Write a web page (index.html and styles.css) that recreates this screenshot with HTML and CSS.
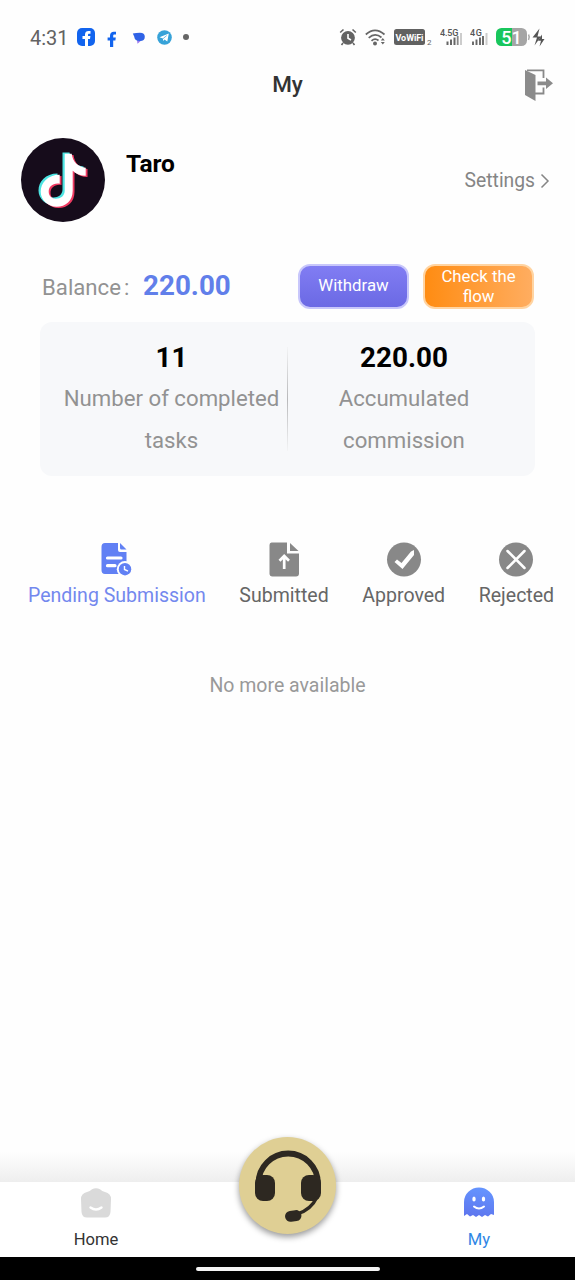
FILE: index.html
```html
<!DOCTYPE html>
<html lang="en">
<head>
<meta charset="utf-8">
<title>My</title>
<link rel="stylesheet" href="styles.css">
</head>
<body>
<div class="screen">
  <div class="status">
    <span class="clock">4:31</span>
    <svg class="st-fb" width="18" height="18" viewBox="0 0 18 18"><rect width="18" height="18" rx="5" fill="#1264ee"/><path d="M8 18V11H5.500V8H8V6.500C8 4 9.500 3 11.500 3H13.500V5.800H12.200C11.300 5.800 11 6.200 11 7V8H13.400L13 11H11V18Z" fill="#fff"/></svg>
    <svg class="st-f" width="10" height="16" viewBox="0 0 10 16"><path d="M3 16V9.500H.6V6.400H3V4.800C3 2 4.600.8 6.800.8H9V3.600H7.700C6.600 3.600 6.200 4 6.200 5V6.400H8.800L8.400 9.500H6.200V16Z" fill="#1264ee"/></svg>
    <svg class="st-chat" width="14" height="12" viewBox="0 0 14 12"><path d="M5 8 5.500 11.800 9.500 8.300Z" fill="#9b79ee"/><path d="M.8 1.500Q4 1 8 .8Q12.800 1 12.800 4.700Q12.800 9 8 9Q2.500 9 2.200 4.500Z" fill="#2f62e6"/></svg>
    <svg class="st-tg" width="15" height="15" viewBox="0 0 15 15"><circle cx="7.500" cy="7.500" r="7.300" fill="#36a2d8"/><path d="M2.500 7.300 11.800 3.500 10.300 11.500 7.500 9.500 6 11V8.500Z" fill="#fff"/><path d="M6 8.700 9.700 5.600" stroke="#36a2d8" stroke-width=".7"/></svg>
    <span class="st-dot"></span>
    <svg class="st-alarm" width="18" height="18" viewBox="0 0 18 18"><circle cx="9" cy="9.800" r="6.900" fill="#636363"/><path d="M1.200 4.500 4.500 1.500M16.800 4.500 13.500 1.500M4 15 2.500 17M14 15 15.500 17" stroke="#636363" stroke-width="1.600"/><path d="M9 6V10.300L12 12" fill="none" stroke="#fff" stroke-width="1.600"/></svg>
    <svg class="st-wifi" width="22" height="17" viewBox="0 0 22 17"><g fill="none" stroke="#666" stroke-width="1.700"><path d="M.8 5.500Q10 -2.700 19.500 5.500"/><path d="M3.700 8.800Q10 3 16.500 8.500"/><path d="M6.500 11.800Q10 8.500 13.500 11.500"/></g><circle cx="10" cy="14.500" r="2" fill="#666"/><path d="M15.800 11.500 17.800 9 19.800 11.500ZM15.800 13 17.800 15.500 19.800 13Z" fill="#666"/></svg>
    <svg class="st-vowifi" width="38" height="18" viewBox="0 0 38 18"><rect width="31" height="16" rx="2.500" fill="#616161"/><text x="15.500" y="11.700" text-anchor="middle" class="vw" textLength="28">VoWiFi</text><text x="33" y="16" class="sub">2</text></svg>
    <svg class="st-sig1" width="23" height="18" viewBox="0 0 23 18"><text x="0" y="7.500" class="net" textLength="18.500">4.5G</text><path d="M7.500 13.500V17M11 11.500V17M14.500 9.500V17" stroke="#666" stroke-width="2"/><path d="M21 5V17" stroke="#ccc" stroke-width="2"/><path d="M17.700 8V17" stroke="#888" stroke-width="1.800"/></svg>
    <svg class="st-sig2" width="18" height="18" viewBox="0 0 18 18"><text x="0" y="7.500" class="net" textLength="12">4G</text><path d="M3 13.500V17M6.500 11.500V17M10 9.500V17M13 8V17" stroke="#666" stroke-width="1.900"/><path d="M16.500 5V17" stroke="#ccc" stroke-width="2"/></svg>
    <span class="battery">51</span>
    <svg class="st-bolt" width="19" height="19" viewBox="31 0 19 19"><path d="M32.500 6.500Q34 9 32.500 12" stroke="#aaa" stroke-width="1.500" fill="none"/><path d="M43.500.5 36.500 9.500H41L38.500 17.500 45 8.500H41.500Z" fill="#555"/><path d="M46 6.500 42 12.800H45L43.500 18.500 48.500 11H46Z" fill="#555"/></svg>
  </div>
  <header class="top">
    <span></span><h1>My</h1>
    <svg width="30" height="32" viewBox="0 0 30 32"><path d="M3 1.300H19.500V9M19.500 18.500V24.500H11" fill="none" stroke="#898989" stroke-width="1.800"/><path d="M1 1 11.500 6V32L1 26Z" fill="#8b8b8b"/><path d="M13.500 12.500H22V8.500L29 14.300 22 20V16.300H13.500Z" fill="#8b8b8b"/></svg>
  </header>
  <section class="profile">
    <svg class="avatar" width="84" height="84" viewBox="0 0 84 84"><circle cx="42" cy="42" r="42" fill="#160c1b"/><defs><path id="note" d="M43 15H50C51 23 56 28 64 29V37C59 37 54 35 51 32V52C51 62 44 68 35 68C26 68 19 61 19 53C19 44 26 36 38 36V45C31 44 27 48 27 53C27 57 30 60 34 60C39 60 43 57 43 52Z"/></defs><use href="#note" x="-1.500" y="-.5" fill="#4de4e2"/><use href="#note" x="2.500" y="2" fill="#ef3b62"/><use href="#note" x=".7" y=".7" fill="#fff"/></svg>
    <div class="name">Taro</div>
    <div class="settings">Settings<svg width="10" height="16" viewBox="0 0 10 16"><path d="M1.500 1.500 8 8 1.500 14.500" fill="none" stroke="#858585" stroke-width="1.500"/></svg></div>
  </section>
  <section class="balance">
    <span class="label">Balance</span><span class="colon">:</span><span class="amount">220.00</span>
    <button class="btn withdraw">Withdraw</button>
    <button class="btn flow">Check the flow</button>
  </section>
  <section class="stats">
    <div class="stat"><b>11</b><span>Number of completed tasks</span></div>
    <div class="rule"></div>
    <div class="stat right"><b>220.00</b><span>Accumulated commission</span></div>
  </section>
  <nav class="tabs">
    <div class="tab active"><svg width="36" height="36" viewBox="0 0 36 36"><path d="M6 2H19V9Q19 11 21 11H27.500V33H6Q2.500 33 2.500 29V6Q2.500 2 6 2Z" fill="#6180f4"/><path d="M21 2 27.500 8.500H22.500Q21 8.500 21 7Z" fill="#6180f4"/><path d="M8.500 17H22M8.500 24.700H16" stroke="#fff" stroke-width="3.200" stroke-linecap="round"/><circle cx="26" cy="28.200" r="8.200" fill="#fefefe"/><circle cx="26" cy="28.200" r="6.200" fill="#6180f4"/><path d="M25.500 25V28.500L29 30.200" fill="none" stroke="#fff" stroke-width="1.400"/></svg><span>Pending Submission</span></div>
    <div class="tab"><svg width="36" height="36" viewBox="0 0 36 36"><path d="M5.500 1.500H21V12.500H33V32.500Q33 35.500 30 35.500H6.500Q3.500 35.500 3.500 32.500V4Q3.500 1.500 5.500 1.500Z" fill="#888"/><path d="M24 2 32.500 10H24Z" fill="#888"/><path d="M18.200 28V15.500M13.500 19.800 18.200 15 23 19.800" fill="none" stroke="#fff" stroke-width="2.700"/></svg><span>Submitted</span></div>
    <div class="tab"><svg width="36" height="36" viewBox="0 0 36 36"><circle cx="18" cy="18.500" r="17" fill="#888"/><path d="M8.500 21 11 18.500 15.500 22 25 10.500 28 9V14L16.500 28Z" fill="#fff"/></svg><span>Approved</span></div>
    <div class="tab"><svg width="36" height="36" viewBox="0 0 36 36"><circle cx="18" cy="18.500" r="17" fill="#888"/><path d="M9.500 10 26.500 27M26.500 10 9.500 27" stroke="#fff" stroke-width="2.500" stroke-linecap="round"/></svg><span>Rejected</span></div>
  </nav>
  <p class="empty">No more available</p>
  <div class="spacer"></div>
  <div class="fade"></div>
  <footer class="bar">
    <div class="item"><svg width="32" height="32" viewBox="0 0 32 32"><path d="M12 2.200Q16 .3 20 2.200Q22 4.500 25 5Q31 6.500 31 12L30.500 25Q30 30.500 25 30.500H7Q2 30.500 1.500 25L1 12Q1 6.500 7 5Q10 4.500 12 2.200Z" fill="#dadada"/><path d="M10.500 20.500Q16 24.500 21.500 20.500" fill="none" stroke="#fff" stroke-width="2.400" stroke-linecap="round"/></svg><span>Home</span></div>
    <div class="item blue"><svg width="32" height="32" viewBox="0 0 32 32"><defs><linearGradient id="g" x1=".6" y1="0" x2=".4" y2="1"><stop stop-color="#6595ff"/><stop offset="1" stop-color="#5e76ee"/></linearGradient></defs><path d="M1 15A15 14.500 0 0 1 31 15V28L28 27 25 29.500 22 28 19 30 16 28 13 30 10 28 7 29.500 4 27 1 29Z" fill="url(#g)"/><ellipse cx="11" cy="12" rx="1.700" ry="2.500" fill="#fff"/><ellipse cx="20.500" cy="12" rx="1.700" ry="2.500" fill="#fff"/><path d="M11 19.500Q16 23.500 21 19.500" fill="none" stroke="#fff" stroke-width="2" stroke-linecap="round"/></svg><span>My</span></div>
    <div class="support"><svg width="97" height="97" viewBox="0 1 97 97"><path d="M19.500 49V47.200A29.700 29.700 0 0 1 78.900 47.200V49" fill="none" stroke="#2d2821" stroke-width="5.800"/><rect x="16" y="39" width="20" height="26" rx="8" fill="#2d2821"/><rect x="62" y="39" width="20" height="26" rx="8" fill="#2d2821"/><path d="M78 61Q72 74 58 78" fill="none" stroke="#2d2821" stroke-width="3.300"/><rect x="46" y="74.500" width="16.500" height="11" rx="5.500" transform="rotate(-8 54 80)" fill="#2d2821"/></svg></div>
  </footer>
  <div class="home"><span></span></div>
</div>
</body>
</html>
```
FILE: styles.css
```css
* { box-sizing: border-box; }
body { margin: 0; background: #fff; font-family: Roboto, "Liberation Sans", sans-serif; }
svg { display: block; flex: none; }
.screen { width: 575px; height: 1280px; display: flex; flex-direction: column; overflow: hidden; background: #fefefe; }
.status { height: 60px; display: flex; align-items: flex-start; padding: 28px 0 0 30px; flex: none; }
.clock { width: 47px; font-size: 20px; line-height: 20px; color: #626262; white-space: nowrap; }
.st-f { margin: 3px 0 0 12px; }
.st-chat { margin: 4px 0 0 15px; }
.st-tg { margin: 2px 0 0 11px; }
.st-dot { width: 6px; height: 6px; margin: 6px 0 0 11px; border-radius: 50%; background: #666; }
.st-alarm { margin-left: 150px; }
.st-wifi { margin: 1px 0 0 8px; }
.st-vowifi { margin: 1px 0 0 7px; }
.st-sig1 { margin-left: 8px; }
.st-sig2 { margin-left: 7px; }
.battery { width: 31px; height: 18px; margin-left: 8px; flex: none; border-radius: 5.5px; background: linear-gradient(90deg, #18c65c 16px, #a5a5a5 16px); color: #fff; font-size: 18px; line-height: 19px; font-weight: 500; text-align: center; }
.vw { font-size: 9px; font-weight: 700; fill: #fff; }
.sub { font-size: 8px; fill: #666; }
.net { font-size: 9px; font-weight: 500; fill: #555; }
.top { height: 50px; flex: none; display: grid; grid-template-columns: 1fr auto 1fr; align-items: center; padding: 0 21px; }
.top h1 { margin: 0 0 2px; font-size: 22.5px; font-weight: 500; color: #333; }
.top svg { justify-self: end; }
.profile { height: 112px; margin-top: 28px; flex: none; display: flex; padding: 0 25px 0 21px; }
.name { margin: 10px 0 0 21px; font-size: 24.5px; line-height: 31px; font-weight: 700; color: #000; }
.settings { display: flex; align-items: center; gap: 5px; height: 85px; margin-left: auto; font-size: 19.3px; color: #858585; }
.balance { height: 72px; flex: none; display: flex; align-items: flex-start; padding: 14px 41px 0 42px; white-space: nowrap; }
.label, .colon { font-size: 22.2px; line-height: 47px; color: #929292; }
.label { width: 79px; }
.colon { width: 22px; padding-left: 3px; }
.amount { font-size: 27.8px; line-height: 43px; font-weight: 700; color: #617fea; }
.btn { width: 111px; height: 45px; padding: 0; border: 2px solid #c8c7fb; border-radius: 12px; color: #fff; font: 16.8px/20px Roboto, sans-serif; }
.withdraw { margin-left: auto; padding-bottom: 4px; background: linear-gradient(#817df3, #6b69e4); }
.flow { margin-left: 14px; border-color: #ffd4a2; background: linear-gradient(90deg, #ff8c12, #ffad60); white-space: normal; padding: 0 14px 4px; }
.stats { height: 154px; margin: 0 40px; flex: none; display: flex; border-radius: 12px; background: #f7f8fa; }
.stat { width: 247px; flex: none; display: flex; flex-direction: column; align-items: center; padding: 15px 7px 0 23px; text-align: center; }
.stat b { font-size: 27.8px; line-height: 41px; color: #000; }
.stat span { width: 217px; font-size: 22.2px; line-height: 41.5px; color: #929292; }
.right { padding: 15px 15px 0 0; }
.right span { width: 150px; }
.rule { width: 1px; height: 104px; margin-top: 25px; background: linear-gradient(#f3f4f5, #b8b8ba 50%, #f3f4f5); }
.tabs { display: flex; gap: 33.6px; margin-top: 65px; padding-left: 28px; height: 75px; flex: none; }
.tab { display: flex; flex-direction: column; align-items: center; color: #666; font-size: 19.55px; line-height: 37px; white-space: nowrap; flex: none; }
.active { color: #7388ee; }
.empty { margin: 51px 0 0; text-align: center; font-size: 19.5px; line-height: 38px; color: #999; }
.spacer { flex: 1; }
.fade { height: 30px; flex: none; background: linear-gradient(#fefefe, #eee); }
.bar { position: relative; height: 75px; flex: none; display: flex; justify-content: space-between; background: #fff; }
.item { width: 192px; display: flex; flex-direction: column; align-items: center; padding-top: 5px; font-size: 16.6px; line-height: 41px; color: #333; }
.blue { color: #3087e5; }
.support { position: absolute; left: 239px; top: -45px; width: 97px; height: 97px; border-radius: 50%; background: #dfcf94; box-shadow: 0 3px 6px #0006; }
.home { height: 23px; flex: none; display: flex; justify-content: center; padding-top: 10px; background: #000; }
.home span { width: 184px; height: 4px; border-radius: 2px; background: #f4f4f4; }
```
